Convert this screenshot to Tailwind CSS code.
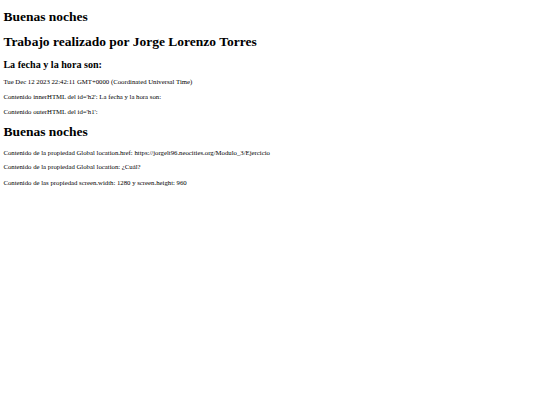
<!DOCTYPE html>
<html lang="es">
<head>
    <meta charset="UTF-8">
    <title>Modulo 3 Ejercicio</title>
    <script src="https://cdn.jsdelivr.net/npm/@tailwindcss/browser@4"></script>
</head>
<body class="bg-white text-black font-['Liberation_Serif',serif] px-[3.375px] pt-[9.05px]">
    <h1 class="text-[13.5px] leading-[15.55px] font-bold">Buenas noches</h1>
    <h1 class="mt-[9.05px] text-[13.5px] leading-[15.55px] font-bold">Trabajo realizado por Jorge Lorenzo Torres</h1>
    <h2 class="mt-[9.6px] text-[10.125px] leading-[11.6px] font-bold">La fecha y la hora son:</h2>
    <p class="mt-[7.85px] text-[6.75px] leading-[7.75px]">Tue Dec 12 2023 22:42:11 GMT+0000 (Coordinated Universal Time)</p>
    <p class="mt-[7.25px] text-[6.75px] leading-[7.75px]">Contenido innerHTML del id='h2': La fecha y la hora son:</p>
    <p class="mt-[6.75px] text-[6.75px] leading-[7.75px]">Contenido outerHTML del id='h1':</p>
    <h1 class="mt-[8.75px] text-[13.5px] leading-[15.55px] font-bold">Buenas noches</h1>
    <p class="mt-[8.9px] text-[6.75px] leading-[7.75px]">Contenido de la propiedad Global location.href: https://jorgelt96.neocities.org/Modulo_3/Ejercicio</p>
    <p class="mt-[6.9px] text-[6.75px] leading-[7.75px]">Contenido de la propiedad Global location: ¿Cuál?</p>
    <p class="mt-[7.6px] text-[6.75px] leading-[7.75px]">Contenido de las propiedad screen.width: 1280 y screen.height: 960</p>
</body>
</html>
